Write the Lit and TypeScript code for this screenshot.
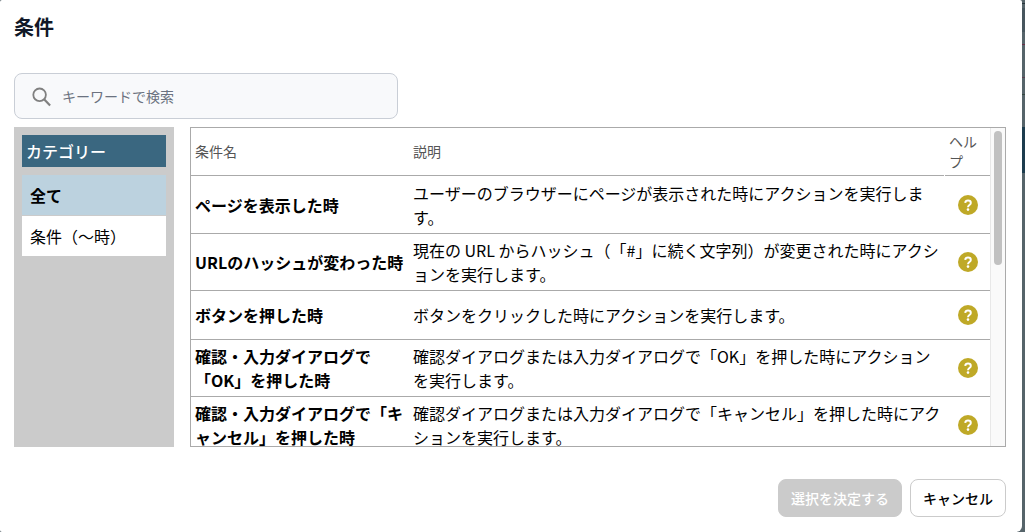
import { LitElement, html, css } from "lit";
import { customElement, state } from "lit/decorators.js";

interface Condition {
  name: string;
  description: string;
}

const CONDITIONS: Condition[] = [
  { name: "ページを表示した時", description: "ユーザーのブラウザーにページが表示された時にアクションを実行します。" },
  { name: "URLのハッシュが変わった時", description: "現在の URL からハッシュ（「#」に続く文字列）が変更された時にアクションを実行します。" },
  { name: "ボタンを押した時", description: "ボタンをクリックした時にアクションを実行します。" },
  { name: "確認・入力ダイアログで「OK」を押した時", description: "確認ダイアログまたは入力ダイアログで「OK」を押した時にアクションを実行します。" },
  { name: "確認・入力ダイアログで「キャンセル」を押した時", description: "確認ダイアログまたは入力ダイアログで「キャンセル」を押した時にアクションを実行します。" },
];

const CATEGORIES = ["全て", "条件（〜時）"];

@customElement("app-root")
export class AppRoot extends LitElement {
  @state() private category = 0;

  static styles = css`
    :host {
      display: block;
      box-sizing: border-box;
      min-height: 100vh;
      padding-right: 3px;
      background: linear-gradient(
        #56646a 0 3px,
        #26343a 3px 4px,
        #56646a 4px 8px,
        #47565e 8px 32px,
        #56646a 32px 44px,
        #6a2f48 44px 45px,
        #56646a 45px 77px,
        #5a4050 77px 78px,
        #56646a 78px 94px,
        #34463f 94px 95px,
        #56646a 95px 127px,
        #1c3c4e 127px 173px,
        #56646a 173px
      );
      font-family: "Noto Sans CJK JP", sans-serif;
      font-size: 16px;
      line-height: 24px;
      text-spacing-trim: space-all;
      color: #000;
    }
    * {
      box-sizing: border-box;
    }
    button,
    input {
      font: inherit;
    }
    .dialog {
      display: flex;
      flex-direction: column;
      min-height: 100vh;
      padding: 12px 16px 15px 14px;
      background: #fff;
      border-radius: 2px 2px 6px 2px;
    }
    .title {
      margin: 0;
      font-size: 20px;
      line-height: 30px;
      font-weight: 700;
      color: #111827;
    }
    .search {
      display: flex;
      align-items: center;
      gap: 9px;
      width: 384px;
      max-width: 100%;
      height: 46px;
      margin: 31px 0 8px;
      padding: 0 14px;
      border: 1px solid #c9ced6;
      border-radius: 8px;
      background: #f8f9fb;
    }
    .search-icon {
      flex: none;
      width: 24px;
      height: 24px;
      fill: none;
      stroke: #808080;
      stroke-width: 1.8;
    }
    .search-input {
      flex: 1;
      min-width: 0;
      padding: 0;
      border: 0;
      outline: 0;
      background: none;
      font-size: 14px;
      line-height: 20px;
      color: #111827;
    }
    .search-input::placeholder {
      color: #6b7280;
      opacity: 1;
    }
    .content {
      display: flex;
      gap: 16px;
      height: 320px;
    }
    .sidebar {
      flex: none;
      width: 160px;
      padding: 8px;
      background: #cbcbcb;
    }
    .sidebar-title {
      margin: 0 0 8px;
      padding: 4px;
      background: #3a6780;
      font-size: 16px;
      font-weight: 500;
      color: #fff;
    }
    .category {
      display: block;
      width: 100%;
      height: 41px;
      padding: 0 8px;
      border: 0;
      border-bottom: 1px solid #cbcbcb;
      background: #fff;
      text-align: left;
      color: #000;
    }
    .category.selected {
      background: #bcd2df;
      font-weight: 700;
    }
    .list {
      flex: 1;
      min-width: 0;
      display: flex;
      border: 1px solid #aaa;
    }
    .scroller {
      flex: 1;
      min-width: 0;
      overflow: auto;
      scrollbar-width: none;
    }
    .table {
      width: 100%;
      border-spacing: 0;
      table-layout: fixed;
    }
    .col-name {
      width: 218px;
    }
    .col-help {
      width: 46px;
    }
    .heading {
      height: 48px;
      padding: 3px 4px 5px;
      background: linear-gradient(#aaa, #aaa) 0 100% / 100% 1px no-repeat;
      font-size: 14px;
      line-height: 20px;
      font-weight: 400;
      text-align: left;
      color: #555;
    }
    .heading:last-child {
      padding-left: 5px;
      background-position: 1px 100%;
    }
    .name,
    .description,
    .help {
      height: 49px;
      padding: 4px 2px 4px 4px;
      border-bottom: 1px solid #aaa;
      text-align: left;
      vertical-align: middle;
    }
    .row:first-child .name {
      height: 58px;
    }
    .name {
      font-weight: 700;
    }
    .help-button {
      display: block;
      margin: 0 auto;
      padding: 0;
      border: 0;
      background: none;
    }
    .help-icon {
      display: block;
      width: 24px;
      height: 24px;
    }
    .disc {
      fill: #bfa927;
    }
    .mark {
      fill: none;
      stroke: #fff;
      stroke-width: 2;
      stroke-linecap: butt;
    }
    .dot {
      fill: #fff;
    }
    .track {
      flex: none;
      width: 15px;
      padding: 3px;
      background: #fafafa;
      border-left: 1px solid #e8e8e8;
    }
    .thumb {
      width: 8px;
      height: 43%;
      border-radius: 4px;
      background: #c1c1c1;
    }
    .actions {
      display: flex;
      justify-content: flex-end;
      gap: 8px;
      margin-top: auto;
    }
    .action {
      height: 38px;
      padding: 0 12px;
      border: 1px solid #cbcbcb;
      border-radius: 8px;
      background: #fff;
      font-size: 14px;
      line-height: 20px;
      font-weight: 500;
      color: #000;
    }
    .action:disabled {
      background: #cbcbcb;
      color: #fff;
    }
  `;

  render() {
    return html`
      <main class="dialog">
        <h1 class="title">条件</h1>
        <label class="search">
          <svg class="search-icon" viewBox="0 0 24 24" aria-hidden="true">
            <circle cx="10.6" cy="10.8" r="6.3" />
            <path d="M15.1 15.3l6 6.1" stroke-width="2.2" />
          </svg>
          <input class="search-input" type="search" placeholder="キーワードで検索" aria-label="キーワードで検索" />
        </label>
        <div class="content">
          <nav class="sidebar">
            <h2 class="sidebar-title">カテゴリー</h2>
            ${CATEGORIES.map(
              (label, index) => html`<button
                class="category ${index === this.category ? "selected" : ""}"
                type="button"
                @click=${() => (this.category = index)}
              >${label}</button>`
            )}
          </nav>
          <div class="list">
            <div class="scroller">
              <table class="table">
                <colgroup>
                  <col class="col-name" />
                  <col />
                  <col class="col-help" />
                </colgroup>
                <thead>
                  <tr>
                    <th class="heading" scope="col">条件名</th>
                    <th class="heading" scope="col">説明</th>
                    <th class="heading" scope="col">ヘルプ</th>
                  </tr>
                </thead>
                <tbody>
                  ${CONDITIONS.map(
                    (item) => html`<tr class="row">
                      <td class="name">${item.name}</td>
                      <td class="description">${item.description}</td>
                      <td class="help">
                        <button class="help-button" type="button" aria-label="ヘルプ">
                          <svg class="help-icon" viewBox="0 0 24 24" aria-hidden="true">
                            <circle class="disc" cx="12" cy="12" r="10" />
                            <path class="mark" d="M9.2 9.8C9.4 8.4 10.5 7.6 12 7.6c1.7 0 2.8.9 2.8 2.3 0 1-.5 1.5-1.4 2.1-1 .7-1.4 1.100-1.400 2.300" />
                            <circle class="dot" cx="12" cy="16.600" r="1.300" />
                          </svg>
                        </button>
                      </td>
                    </tr>`
                  )}
                </tbody>
              </table>
            </div>
            <div class="track" aria-hidden="true"><div class="thumb"></div></div>
          </div>
        </div>
        <div class="actions">
          <button class="action" type="button" disabled>選択を決定する</button>
          <button class="action" type="button">キャンセル</button>
        </div>
      </main>
    `;
  }
}
